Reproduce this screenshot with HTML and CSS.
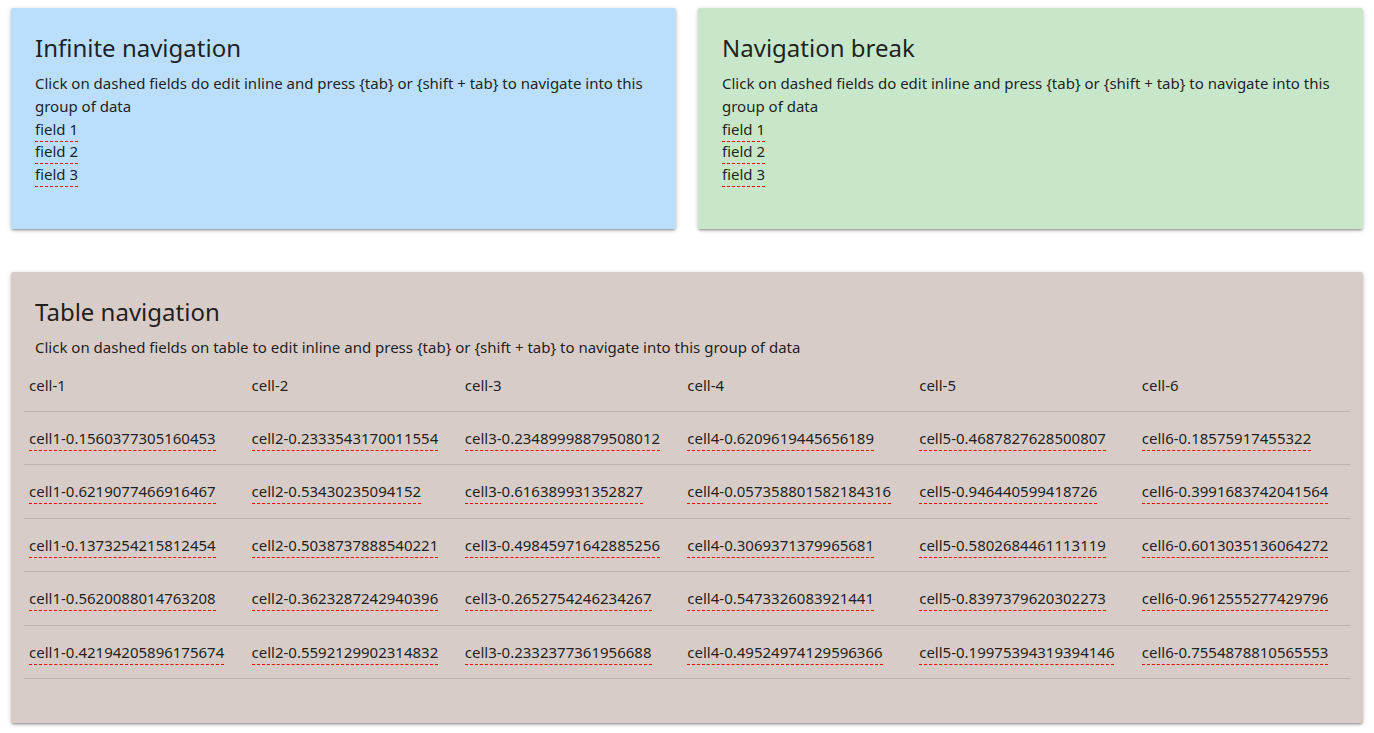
FILE: index.html
```html
<!DOCTYPE html>
<html>
<head>
<meta charset="utf-8">
<link rel="stylesheet" href="styles.css">
</head>
<body>
<div class="row">
  <div class="col half">
    <div class="card blue">
      <div class="card-content">
        <span class="card-title">Infinite navigation</span>
        <p>Click on dashed fields do edit inline and press {tab} or {shift + tab} to navigate into this group of data</p>
        <div class="fields">
          <div class="field"><span class="editable">field 1</span></div>
          <div class="field"><span class="editable">field 2</span></div>
          <div class="field"><span class="editable">field 3</span></div>
        </div>
      </div>
    </div>
  </div>
  <div class="col half">
    <div class="card green">
      <div class="card-content">
        <span class="card-title">Navigation break</span>
        <p>Click on dashed fields do edit inline and press {tab} or {shift + tab} to navigate into this group of data</p>
        <div class="fields">
          <div class="field"><span class="editable">field 1</span></div>
          <div class="field"><span class="editable">field 2</span></div>
          <div class="field"><span class="editable">field 3</span></div>
        </div>
      </div>
    </div>
  </div>
</div>
<div class="row">
  <div class="col full">
    <div class="card brown">
      <div class="card-content">
        <span class="card-title">Table navigation</span>
        <p class="table-intro">Click on dashed fields on table to edit inline and press {tab} or {shift + tab} to navigate into this group of data</p>
        <div class="table-wrap">
          <table>
            <thead>
              <tr><th>cell-1</th><th>cell-2</th><th>cell-3</th><th>cell-4</th><th>cell-5</th><th>cell-6</th></tr>
            </thead>
            <tbody>
              <tr>
                <td><span class="editable">cell1-0.1560377305160453</span></td>
                <td><span class="editable">cell2-0.2333543170011554</span></td>
                <td><span class="editable">cell3-0.23489998879508012</span></td>
                <td><span class="editable">cell4-0.6209619445656189</span></td>
                <td><span class="editable">cell5-0.4687827628500807</span></td>
                <td><span class="editable">cell6-0.18575917455322</span></td>
              </tr>
              <tr>
                <td><span class="editable">cell1-0.6219077466916467</span></td>
                <td><span class="editable">cell2-0.53430235094152</span></td>
                <td><span class="editable">cell3-0.616389931352827</span></td>
                <td><span class="editable">cell4-0.057358801582184316</span></td>
                <td><span class="editable">cell5-0.946440599418726</span></td>
                <td><span class="editable">cell6-0.3991683742041564</span></td>
              </tr>
              <tr>
                <td><span class="editable">cell1-0.1373254215812454</span></td>
                <td><span class="editable">cell2-0.5038737888540221</span></td>
                <td><span class="editable">cell3-0.49845971642885256</span></td>
                <td><span class="editable">cell4-0.3069371379965681</span></td>
                <td><span class="editable">cell5-0.5802684461113119</span></td>
                <td><span class="editable">cell6-0.6013035136064272</span></td>
              </tr>
              <tr>
                <td><span class="editable">cell1-0.5620088014763208</span></td>
                <td><span class="editable">cell2-0.3623287242940396</span></td>
                <td><span class="editable">cell3-0.2652754246234267</span></td>
                <td><span class="editable">cell4-0.5473326083921441</span></td>
                <td><span class="editable">cell5-0.8397379620302273</span></td>
                <td><span class="editable">cell6-0.9612555277429796</span></td>
              </tr>
              <tr>
                <td><span class="editable">cell1-0.42194205896175674</span></td>
                <td><span class="editable">cell2-0.5592129902314832</span></td>
                <td><span class="editable">cell3-0.2332377361956688</span></td>
                <td><span class="editable">cell4-0.49524974129596366</span></td>
                <td><span class="editable">cell5-0.19975394319394146</span></td>
                <td><span class="editable">cell6-0.7554878810565553</span></td>
              </tr>
            </tbody>
          </table>
        </div>
      </div>
    </div>
  </div>
</div>
</body>
</html>
```

FILE: styles.css
```css
html {
  font-size: 15px;
}
body {
  margin: 0;
  font-family: "Noto Sans", "Open Sans", sans-serif;
  font-size: 15px;
  line-height: 1.5;
  color: rgba(0, 0, 0, 0.87);
  background: #fff;
}
.row {
  display: flex;
  margin: 0 0 19px 0;
}
.col {
  box-sizing: border-box;
  padding: 0 11px;
}
.half {
  width: 50%;
}
.full {
  width: 100%;
}
.card {
  margin: 8px 0 16px 0;
  border-radius: 2px;
  box-shadow: 0 2px 2px 0 rgba(0,0,0,0.14), 0 3px 1px -2px rgba(0,0,0,0.12), 0 1px 5px 0 rgba(0,0,0,0.2);
}
.blue { background: #bbdefb; }
.green { background: #c8e6c9; }
.brown { background: #d7ccc8; }
.card-content {
  padding: 24px;
}
.card-title {
  display: block;
  font-size: 24px;
  font-weight: 400;
  line-height: 32px;
  margin-bottom: 8px;
}
p {
  margin: 0;
}
.table-intro {
  line-height: 22px;
  margin-bottom: 1px;
}
.fields {
  line-height: 22px;
  padding-top: 1px;
  margin-bottom: 20px;
}
.field:nth-child(3) {
  padding-top: 1px;
}
.editable {
  display: inline-block;
  line-height: 22px;
  padding-bottom: 1px;
  border-bottom: 1px dashed #ff0000;
  margin-bottom: -2px;
}
.table-wrap {
  margin: 0 -11px 20px -11px;
}
table {
  width: 100%;
  border-collapse: collapse;
  border-spacing: 0;
}
tr {
  border-bottom: 1px solid rgba(0, 0, 0, 0.12);
}
th, td {
  padding: 15px 5px;
  line-height: 22px;
  text-align: left;
  vertical-align: middle;
  font-weight: 400;
  white-space: nowrap;
}
tbody tr:nth-child(even) td {
  padding-bottom: 16px;
}
```
